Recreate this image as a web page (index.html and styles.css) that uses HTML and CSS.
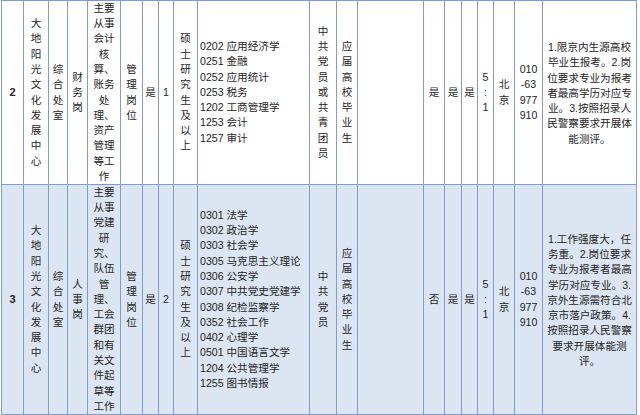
FILE: index.html
```html
<!DOCTYPE html>
<html lang="zh">
<head>
<meta charset="utf-8">
<link rel="stylesheet" href="styles.css">
</head>
<body>
<div class="sheet">
  <div class="c r2 num">2</div>
  <div class="c r2">大<br>地<br>阳<br>光<br>文<br>化<br>发<br>展<br>中<br>心</div>
  <div class="c r2">综<br>合<br>处<br>室</div>
  <div class="c r2">财<br>务<br>岗</div>
  <div class="c r2">主要<br>从事<br>会计<br>核<br>算、<br>账务<br>处<br>理、<br>资产<br>管理<br>等工<br>作</div>
  <div class="c r2">管<br>理<br>岗<br>位</div>
  <div class="c r2">是</div>
  <div class="c r2">1</div>
  <div class="c r2">硕<br>士<br>研<br>究<br>生<br>及<br>以<br>上</div>
  <div class="c r2 left">0202 应用经济学<br>0251 金融<br>0252 应用统计<br>0253 税务<br>1202 工商管理学<br>1253 会计<br>1257 审计</div>
  <div class="c r2">中<br>共<br>党<br>员<br>或<br>共<br>青<br>团<br>员</div>
  <div class="c r2">应<br>届<br>高<br>校<br>毕<br>业<br>生</div>
  <div class="c r2"></div>
  <div class="c r2">是</div>
  <div class="c r2">是</div>
  <div class="c r2">是</div>
  <div class="c r2">5<br>:<br>1</div>
  <div class="c r2">北<br>京</div>
  <div class="c r2">010<br>-63<br>977<br>910</div>
  <div class="c r2 note">1.限京内生源高校<br>毕业生报考。2.岗<br>位要求专业为报考<br>者最高学历对应专<br>业。3.按照招录人<br>民警察要求开展体<br>能测评。</div>

  <div class="c r3 num">3</div>
  <div class="c r3">大<br>地<br>阳<br>光<br>文<br>化<br>发<br>展<br>中<br>心</div>
  <div class="c r3">综<br>合<br>处<br>室</div>
  <div class="c r3">人<br>事<br>岗</div>
  <div class="c r3">主要<br>从事<br>党建<br>研<br>究、<br>队伍<br>管<br>理、<br>工会<br>群团<br>和有<br>关文<br>件起<br>草等<br>工作</div>
  <div class="c r3">管<br>理<br>岗<br>位</div>
  <div class="c r3">是</div>
  <div class="c r3">2</div>
  <div class="c r3">硕<br>士<br>研<br>究<br>生<br>及<br>以<br>上</div>
  <div class="c r3 left">0301 法学<br>0302 政治学<br>0303 社会学<br>0305 马克思主义理论<br>0306 公安学<br>0307 中共党史党建学<br>0308 纪检监察学<br>0352 社会工作<br>0402 心理学<br>0501 中国语言文学<br>1204 公共管理学<br>1255 图书情报</div>
  <div class="c r3">中<br>共<br>党<br>员</div>
  <div class="c r3">应<br>届<br>高<br>校<br>毕<br>业<br>生</div>
  <div class="c r3"></div>
  <div class="c r3">否</div>
  <div class="c r3">是</div>
  <div class="c r3">是</div>
  <div class="c r3">5<br>:<br>1</div>
  <div class="c r3">北<br>京</div>
  <div class="c r3">010<br>-63<br>977<br>910</div>
  <div class="c r3 note">1.工作强度大，任<br>务重。2.岗位要求<br>专业为报考者最高<br>学历对应专业。3.<br>京外生源需符合北<br>京市落户政策。4.<br>按照招录人民警察<br>要求开展体能测<br>评。</div>
</div>
</body>
</html>
```

FILE: styles.css
```css
html, body {
  margin: 0;
  padding: 0;
  background: #ffffff;
}
body {
  width: 640px;
  height: 415px;
  overflow: hidden;
  font-family: "Liberation Sans", "Noto Sans CJK SC", sans-serif;
  font-size: 10.6px;
  line-height: 15.3px;
  color: #1e1e1e;
}
.sheet {
  margin-left: 1px;
  display: grid;
  grid-template-columns: 21px 24px 18px 19px 32px 21px 15px 14px 23px 111px 26px 20px 65px 20px 16px 15px 15px 20px 27px 93px;
  grid-template-rows: 183px 229px;
  gap: 1px;
  padding: 1px;
  width: max-content;
  background: #819dc3;
}
.c {
  display: flex;
  flex-direction: column;
  justify-content: center;
  align-items: center;
  text-align: center;
  white-space: nowrap;
  overflow: hidden;
}
.r2 {
  background: #ffffff;
}
.r3 {
  background: #dce6f2;
}
.num {
  font-weight: bold;
  font-size: 11px;
}
.left {
  align-items: flex-start;
  text-align: left;
  padding-left: 2px;
}
.note {
  padding-top: 2px;
}
```
